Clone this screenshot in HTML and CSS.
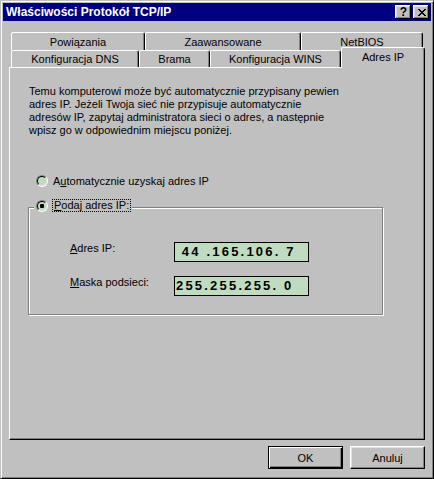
FILE: index.html
```html
<!DOCTYPE html>
<html lang="pl">
<head>
<meta charset="utf-8">
<title>Właściwości Protokół TCP/IP</title>
<link rel="stylesheet" href="styles.css">
</head>
<body>
<div class="window">
  <div class="titlebar">
    <span class="title">Właściwości Protokół TCP/IP</span>
    <div class="caption-btns">
      <div class="cap-btn help">?</div>
      <div class="cap-btn close">
        <svg width="8" height="7" viewBox="0 0 8 7" shape-rendering="crispEdges">
          <path d="M0 0h2v1h-2z M6 0h2v1h-2z M1 1h2v1h-2z M5 1h2v1h-2z M2 2h4v1h-4z M3 3h2v1h-2z M2 4h4v1h-4z M1 5h2v1h-2z M5 5h2v1h-2z M0 6h2v1h-2z M6 6h2v1h-2z" fill="#000"/>
        </svg>
      </div>
    </div>
  </div>
  <div class="tabs">
    <div class="tab-row back">
      <div class="tab t-pow">Powiązania</div>
      <div class="tab t-zaa">Zaawansowane</div>
      <div class="tab t-net">NetBIOS</div>
    </div>
    <div class="tab-row front">
      <div class="tab t-dns">Konfiguracja DNS</div>
      <div class="tab t-bra">Brama</div>
      <div class="tab t-win">Konfiguracja WINS</div>
      <div class="tab t-ip sel">Adres IP</div>
    </div>
  </div>
  <div class="panel">
    <p class="desc">Temu komputerowi może być automatycznie przypisany pewien<br>adres IP. Jeżeli Twoja sieć nie przypisuje automatycznie<br>adresów IP, zapytaj administratora sieci o adres, a następnie<br>wpisz go w odpowiednim miejscu poniżej.</p>
    <div class="radio-row">
      <span class="radio"><span class="radio-in"></span></span>
      <span class="lbl">A<u>u</u>tomatycznie uzyskaj adres IP</span>
    </div>
    <div class="group">
      <div class="legend">
        <span class="radio"><span class="radio-in"><span class="dot"></span></span></span>
        <span class="lbl focus"><u>P</u>odaj adres IP:</span>
      </div>
      <div class="field-row first">
        <span class="flabel"><u>A</u>dres IP:</span>
        <span class="ipbox"> 44 .165.106. 7</span>
      </div>
      <div class="field-row">
        <span class="flabel"><u>M</u>aska podsieci:</span>
        <span class="ipbox">255.255.255. 0</span>
      </div>
    </div>
  </div>
  <div class="buttons">
    <div class="btn default">OK</div>
    <div class="btn">Anuluj</div>
  </div>
</div>
</body>
</html>
```
FILE: styles.css
```css
html, body {
  margin: 0;
  padding: 0;
  background: #c0c0c0;
}

.window {
  width: 434px;
  height: 479px;
  box-sizing: border-box;
  background: #c0c0c0;
  border: 1px solid;
  border-color: #c0c0c0 #000 #000 #c0c0c0;
  box-shadow: inset 1px 1px 0 #fff, inset -1px -1px 0 #808080;
  padding: 2px;
  display: flex;
  flex-direction: column;
  font-family: "Liberation Sans", Arial, sans-serif;
  font-size: 11px;
  color: #000;
}

/* title bar */
.titlebar {
  height: 18px;
  flex: none;
  background: #000080;
  display: flex;
  align-items: center;
  justify-content: space-between;
  padding: 0 2px 0 3px;
}

.title {
  color: #fff;
  font-weight: bold;
  font-size: 12px;
  white-space: nowrap;
}

.caption-btns {
  display: flex;
  gap: 2px;
}

.cap-btn {
  width: 16px;
  height: 14px;
  box-sizing: border-box;
  background: #c0c0c0;
  box-shadow: inset -1px -1px 0 #000, inset 1px 1px 0 #fff, inset -2px -2px 0 #808080, inset 2px 2px 0 #dfdfdf;
  display: flex;
  align-items: center;
  justify-content: center;
}

.cap-btn.help {
  font-weight: bold;
  font-size: 12px;
  line-height: 14px;
  padding-left: 1px;
}

.cap-btn.close svg {
  display: block;
  margin-left: 1px;
}

/* tabs */
.tabs {
  margin: 11px 0 0 8px;
  flex: none;
}

.tab-row {
  display: flex;
}

.tab-row.back {
  height: 18px;
}

.tab-row.front {
  height: 17px;
  align-items: flex-end;
}

.tab {
  box-sizing: border-box;
  height: 100%;
  border: 1px solid;
  border-bottom: none;
  border-color: #fff #000 transparent #fff;
  border-radius: 2px 3px 0 0;
  box-shadow: inset -1px 0 0 #808080;
  background: #c0c0c0;
  display: flex;
  align-items: center;
  justify-content: center;
  white-space: nowrap;
}

.t-pow { width: 134px; }
.t-zaa { width: 156px; }
.t-net { width: 122px; }
.t-dns { width: 128px; }
.t-bra { width: 71px; }
.t-win { width: 131px; }
.t-ip  { width: 84px; }

.tab.sel {
  height: 21px;
  margin-bottom: -1px;
  position: relative;
  z-index: 1;
  padding-bottom: 3px;
}

/* panel */
.panel {
  margin: 0 6px;
  height: 373px;
  flex: none;
  box-sizing: border-box;
  border: 1px solid;
  border-color: #fff #000 #000 #fff;
  box-shadow: inset -1px -1px 0 #808080;
  padding-top: 17px;
}

.desc {
  margin: 0 0 0 19px;
  line-height: 13px;
  white-space: nowrap;
}

.radio-row {
  margin: 38px 0 0 26px;
  height: 12px;
  display: flex;
  align-items: center;
  gap: 5px;
  line-height: 12px;
}

.radio {
  width: 12px;
  height: 12px;
  box-sizing: border-box;
  border-radius: 50%;
  border: 1px solid;
  border-color: #808080 #fff #fff #808080;
  display: flex;
  flex: none;
}

.radio-in {
  width: 10px;
  height: 10px;
  box-sizing: border-box;
  border-radius: 50%;
  border: 1px solid;
  border-color: #000 #dfdfdf #dfdfdf #000;
  background: #c0dcc0;
  display: flex;
  align-items: center;
  justify-content: center;
}

.dot {
  width: 4px;
  height: 4px;
  border-radius: 1px;
  background: #000;
}

.group {
  margin: 20px 0 0 18px;
  width: 355px;
  height: 108px;
  box-sizing: border-box;
  border: 1px solid #808080;
  box-shadow: 1px 1px 0 #fff, inset 1px 1px 0 #fff;
}

.legend {
  margin: -9px 0 0 5px;
  padding: 0 1px 0 2px;
  height: 13px;
  background: #c0c0c0;
  display: inline-flex;
  align-items: center;
  gap: 4px;
  vertical-align: top;
}

.focus {
  border: 1px dotted #000;
  padding: 0 1px;
  line-height: 11px;
}

.field-row {
  display: flex;
  align-items: flex-start;
  margin: 21px 0 0 41px;
}

.field-row.first {
  margin-top: 22px;
}

.flabel {
  width: 104px;
  line-height: 13px;
}

.ipbox {
  width: 135px;
  height: 20px;
  box-sizing: border-box;
  border: 1px solid #000;
  background: #c0dcc0;
  font-weight: bold;
  font-size: 13px;
  letter-spacing: 2.2px;
  line-height: 18px;
  padding-left: 1px;
  white-space: pre;
}

.field-row + .field-row {
  margin-top: 14px;
}

/* buttons */
.buttons {
  margin-top: 6px;
  display: flex;
  justify-content: flex-end;
  gap: 7px;
  padding-right: 6px;
}

.btn {
  width: 75px;
  height: 23px;
  box-sizing: border-box;
  border: 1px solid;
  border-color: #fff #000 #000 #fff;
  box-shadow: inset -1px -1px 0 #808080, inset 1px 1px 0 #dfdfdf;
  display: flex;
  align-items: center;
  justify-content: center;
}

.btn.default {
  border-color: #000;
  box-shadow: inset 1px 1px 0 #fff, inset -1px -1px 0 #000, inset -2px -2px 0 #808080;
}
```
